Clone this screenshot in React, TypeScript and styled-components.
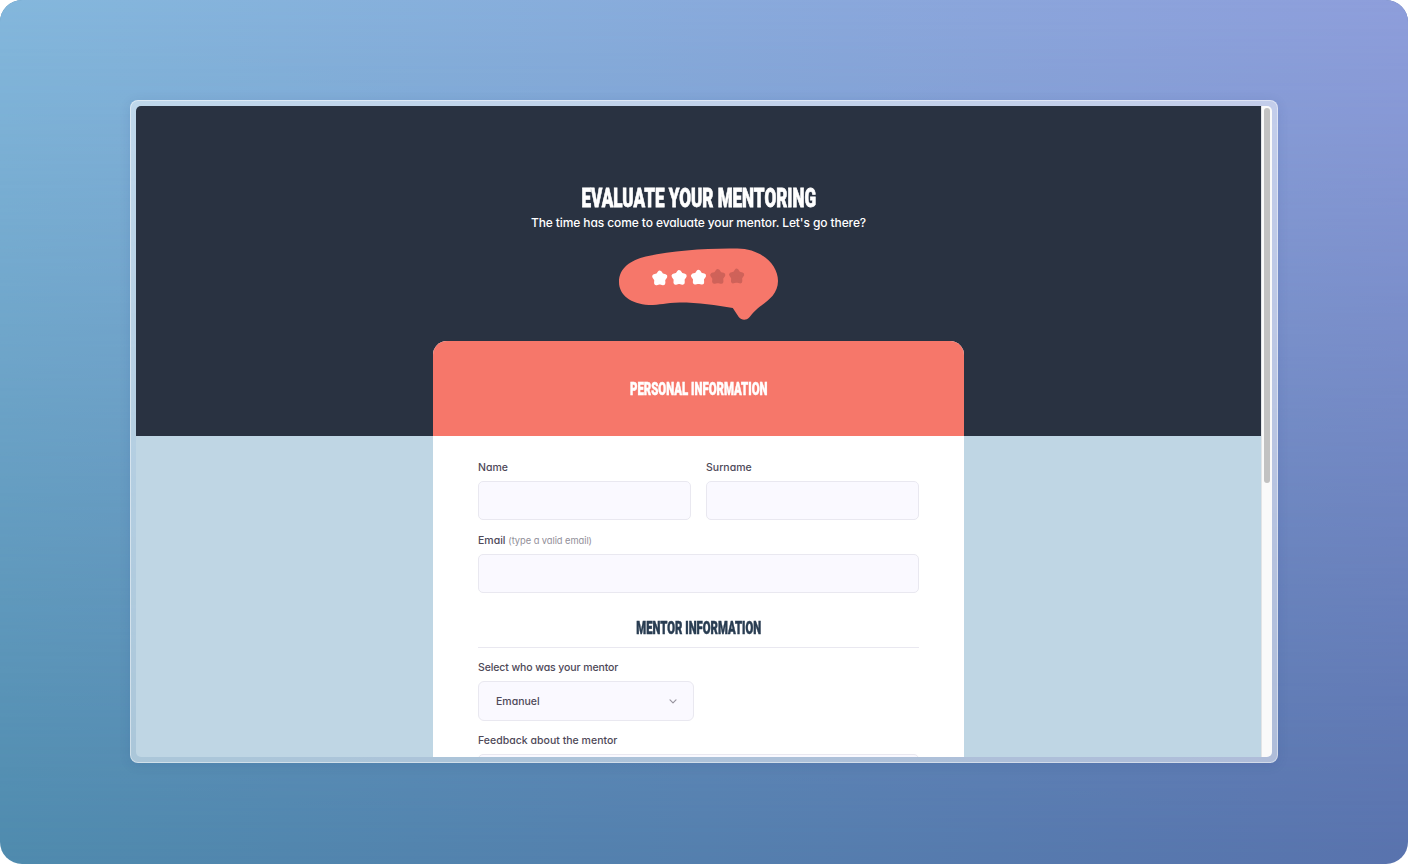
import React from "react";
import styled, { createGlobalStyle } from "styled-components";

const GlobalStyle = createGlobalStyle`
  * { box-sizing: border-box; }
  body { margin: 0; background: #fff; }
`;

const Backdrop = styled.main`
  position: relative;
  width: 1408px;
  height: 864px;
  padding: 100px 130px 101px;
  border-radius: 22px;
  overflow: hidden;
  isolation: isolate;
  background: linear-gradient(90deg, #4f8bae, #5973ae);
  font-family: Inter, "Open Sans", sans-serif;
  font-feature-settings: "cv11";
  &::before {
    content: "";
    position: absolute;
    z-index: -1;
    inset: 0;
    background: linear-gradient(90deg, #84b7dc, #8e9edb);
    mask-image: linear-gradient(180deg, #000, transparent);
  }
`;

const Frame = styled.div`
  height: 663px;
  padding: 5px;
  border: 1px solid rgba(255, 255, 255, 0.45);
  border-radius: 8px;
  background: rgba(255, 255, 255, 0.5);
  box-shadow: 0 2px 12px rgba(30, 60, 120, 0.12);
`;

const Viewport = styled.div`
  display: flex;
  height: 651px;
  border-radius: 5px;
  overflow: hidden;
`;

const Page = styled.div`
  display: flex;
  flex-direction: column;
  align-items: center;
  width: 1125px;
  overflow: hidden;
  background: linear-gradient(#293241 330px, #bfd6e4 330px);
`;

const Scrollbar = styled.div`
  width: 11px;
  padding: 2px 2px 0;
  border-left: 1px solid #e2e4e6;
  background: #fafafa;
`;

const Thumb = styled.div`
  width: 6px;
  height: 375px;
  border-radius: 3px;
  background: #c2c2c2;
`;

const Header = styled.header`
  display: flex;
  flex-direction: column;
  align-items: center;
  flex: none;
  height: 235px;
  padding-top: 77px;
  color: #fff;
`;

const Condensed = styled.h2<{ $size: number; $line: number; $scale: number; $color?: string }>`
  margin: 0;
  font: 900 ${(p) => p.$size}px/${(p) => p.$line}px Roboto, sans-serif;
  color: ${(p) => p.$color ?? "#fff"};
  -webkit-text-stroke: ${(p) => p.$size / 34}px ${(p) => p.$color ?? "#fff"};
  text-transform: uppercase;
  white-space: nowrap;
  transform: scaleX(${(p) => p.$scale});
`;

const Intro = styled.p`
  margin: 0 0 15px;
  font-size: 12px;
  font-weight: 500;
  line-height: 20px;
  letter-spacing: -0.1px;
  white-space: nowrap;
`;

const Bubble = styled.svg`
  display: block;
  width: 159px;
  height: 72px;
  flex: none;
`;

const Card = styled.form`
  width: 531px;
  height: 700px;
  flex: none;
  border-radius: 14px 14px 0 0;
  overflow: hidden;
  background: #fff;
`;

const CardHeader = styled.div`
  display: flex;
  justify-content: center;
  align-items: center;
  height: 95px;
  background: #f6776a;
`;

const Fields = styled.div`
  display: flex;
  flex-direction: column;
  padding: 23px 45px 0;
`;

const Row = styled.div`
  display: grid;
  grid-template-columns: 1fr 1fr;
  column-gap: 15px;
`;

const Field = styled.label`
  display: block;
  height: 73px;
  color: #4e4958;
`;

const Label = styled.span<{ $spacing?: number }>`
  display: block;
  height: 22px;
  font-size: 10.5px;
  font-weight: 450;
  line-height: 17px;
  letter-spacing: ${(p) => p.$spacing ?? 0.02}px;
  white-space: nowrap;
`;

const Hint = styled.span`
  font-size: 9.3px;
  font-weight: 400;
  letter-spacing: -0.05px;
  color: #918e98;
`;

const Input = styled.input`
  display: block;
  width: 100%;
  height: 39px;
  padding: 0 17px;
  border: 1px solid #e9e8f0;
  border-radius: 5px;
  background: #faf9ff;
  outline: none;
`;

const Section = styled.div`
  display: flex;
  justify-content: center;
  height: 43px;
  margin-bottom: 11px;
  padding-top: 12px;
  border-bottom: 1px solid #e9e8f0;
`;

const Select = styled.div`
  display: flex;
  align-items: center;
  justify-content: space-between;
  width: 216px;
  height: 40px;
  padding: 0 16px 0 17px;
  border: 1px solid #e9e8f0;
  border-radius: 6px;
  background: #faf9ff;
  font-size: 10.5px;
  font-weight: 450;
`;

const Chevron = styled.svg`
  width: 8px;
  height: 5px;
`;

const stars = [
  { x: 41, y: 30, on: true },
  { x: 60.5, y: 29.5, on: true },
  { x: 80, y: 29.3, on: true },
  { x: 99.4, y: 28.6, on: false },
  { x: 118.4, y: 28.2, on: false },
];

export default function App() {
  return (
    <>
      <GlobalStyle />
      <Backdrop>
        <Frame>
          <Viewport>
            <Page>
              <Header>
                <Condensed as="h1" $size={26} $line={30} $scale={0.656}>Evaluate your mentoring</Condensed>
                <Intro>The time has come to evaluate your mentor. Let's go there?</Intro>
                <Bubble viewBox="0 0 160 72" preserveAspectRatio="none" aria-hidden="true">
                  <path
                    fill="#f6776a"
                    d="M0 34C0 20 12 12 27 8.5C52 3 88 0 119 .6C144 1 160 17 160 33C160 45 151 52 144 57C137 62 134 66 131 69.500C128 72.500 123.500 72.500 120.500 69L114.500 60C98 57 80 54.500 61 54.500C46 55 42 57 30 57C12 56 0 47 0 34Z"
                  />
                  {stars.map((s) => (
                    <path
                      key={s.x}
                      transform={`translate(${s.x} ${s.y})`}
                      d="M0-5.300L1.900-2.500L5.400-1.600L3.300 1.500L3.500 5L0 4.200L-3.500 5L-3.300 1.500L-5.400-1.600L-1.900-2.500Z"
                      fill={s.on ? "#fff" : "#cf6259"}
                      stroke={s.on ? "#fff" : "#cf6259"}
                      strokeWidth="4.4"
                      strokeLinejoin="round"
                    />
                  ))}
                </Bubble>
              </Header>
              <Card>
                <CardHeader>
                  <Condensed $size={17.5} $line={22} $scale={0.65}>Personal information</Condensed>
                </CardHeader>
                <Fields>
                  <Row>
                    <Field><Label>Name</Label><Input /></Field>
                    <Field><Label>Surname</Label><Input /></Field>
                  </Row>
                  <Field>
                    <Label>Email <Hint>(type a valid email)</Hint></Label>
                    <Input />
                  </Field>
                  <Section>
                    <Condensed $size={17.5} $line={22} $scale={0.645} $color="#293d52">Mentor information</Condensed>
                  </Section>
                  <Field as="div">
                    <Label $spacing={-0.1}>Select who was your mentor</Label>
                    <Select>
                      Emanuel
                      <Chevron viewBox="0 0 8 5" fill="none" stroke="#98959f">
                        <path d="M1 .8L4 3.800L7 .8" strokeWidth="1.200" strokeLinecap="round" strokeLinejoin="round" />
                      </Chevron>
                    </Select>
                  </Field>
                  <Field><Label>Feedback about the mentor</Label><Input /></Field>
                </Fields>
              </Card>
            </Page>
            <Scrollbar><Thumb /></Scrollbar>
          </Viewport>
        </Frame>
      </Backdrop>
    </>
  );
}
